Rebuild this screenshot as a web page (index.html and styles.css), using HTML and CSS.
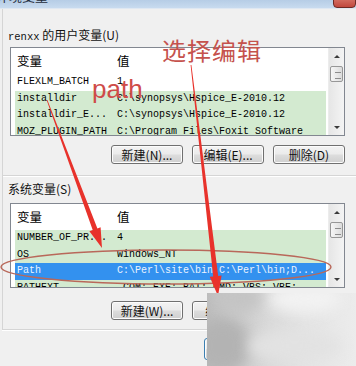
FILE: index.html
```html
<!DOCTYPE html>
<html lang="zh-CN">
<head>
<meta charset="UTF-8">
<meta name="viewport" content="width=device-width,initial-scale=1.0">
<title>环境变量</title>
<link rel="stylesheet" href="styles.css">
</head>
<body>

<!-- ───── title bar ───── -->
<div class="titlebar">
  <span class="title">环境变量</span>
  <span class="close"></span>
</div>

<!-- ───── user variables ───── -->
<section class="group user">
  <div class="caption"><span class="mono">renxx</span> 的用户变量(U)</div>
  <div class="listbox">
    <div class="rows">
      <div class="row head"><span class="k">变量</span><span class="v">值</span></div>
      <div class="row"><span class="k">FLEXLM_BATCH</span><span class="v">1</span></div>
      <div class="row tint"><span class="k">installdir</span><span class="v">C:\synopsys\Hspice_E-2010.12</span></div>
      <div class="row tint"><span class="k">installdir_E...</span><span class="v">C:\synopsys\Hspice_E-2010.12</span></div>
      <div class="row tint"><span class="k">MOZ_PLUGIN_PATH</span><span class="v">C:\Program Files\Foxit Software</span></div>
    </div>
    <div class="scroll"><span class="arrow up"></span><span class="track"><span class="thumb"></span></span><span class="arrow down"></span></div>
  </div>
  <div class="buttons">
    <button>新建(N)...</button>
    <button>编辑(E)...</button>
    <button>删除(D)</button>
  </div>
</section>

<!-- ───── system variables ───── -->
<section class="group sys">
  <div class="caption">系统变量(S)</div>
  <div class="listbox">
    <div class="rows">
      <div class="row head"><span class="k">变量</span><span class="v">值</span></div>
      <div class="row tint"><span class="k">NUMBER_OF_PR...</span><span class="v">4</span></div>
      <div class="row tint"><span class="k">OS</span><span class="v">Windows_NT</span></div>
      <div class="row sel"><span class="k">Path</span><span class="v">C:\Perl\site\bin;C:\Perl\bin;D...</span></div>
      <div class="row tint"><span class="k">PATHEXT</span><span class="v">.COM;.EXE;.BAT;.CMD;.VBS;.VBE;</span></div>
    </div>
    <div class="scroll"><span class="arrow up"></span><span class="track"><span class="thumb"></span></span><span class="arrow down"></span></div>
  </div>
  <div class="buttons">
    <button>新建(W)...</button>
    <button>编辑(I)...</button>
    <button>删除(L)</button>
  </div>
</section>

<div class="footer"><button class="ok">确定</button></div>

<!-- ───── red annotations ───── -->
<svg class="notes" width="356" height="366" viewBox="0 0 356 366">
  <ellipse cx="166" cy="267" rx="165" ry="17" fill="none" stroke="#b9685a" stroke-width="1.4"/>
  <polygon fill="#e8322b" points="46.6,100.1 92.7,230.1 89.4,231.3 102,248 100.6,227.2 97.4,228.4 47.4,99.9"/>
  <polygon fill="#e8322b" points="190.6,65 213.2,276.4 209.7,276.8 218,296 221.6,275.4 218.2,275.9 191.4,65"/>
  <text x="162" y="60" class="note-cn">选择编辑</text>
  <text x="92" y="98" class="note-en">path</text>
</svg>

<!-- blurred patch -->
<div class="smudge"><span class="blob b1"></span><span class="blob b2"></span><span class="blob b3"></span><span class="blob b4"></span></div>

</body>
</html>
```

FILE: styles.css
```css
:root{
  --bg:#f0f0f0; --line:#d5d5d5; --border:#828790; --tint:#d3ead0; --sel:#3391ef;
  --cn:"Noto Sans CJK SC"; --note:#c5524d; --arrow:#e8322b;
}
*{box-sizing:border-box;margin:0;padding:0}
body{width:356px;height:366px;overflow:hidden;position:relative;background:var(--bg);
  font-family:"Liberation Sans","Noto Sans CJK SC",sans-serif;font-size:12px;color:#000}

/* ─ title bar ─ */
.titlebar{height:9px;position:relative;overflow:hidden;background:linear-gradient(180deg,#b6cde6,#c8dbef);border-bottom:1px solid #dfe8f2}
.title{position:absolute;left:-4px;top:-10px;font-size:13px;line-height:14px;color:#1e2b3a}
.close{position:absolute;right:0;top:-4px;width:23px;height:12px;border:1px solid #6d2a25;border-radius:0 0 4px 4px;background:linear-gradient(180deg,#d8796d,#c1483e)}

/* ─ groups ─ */
.group{margin-left:2px;border-left:1px solid var(--line);border-bottom:1px solid var(--line);box-shadow:0 1px 0 #fff;padding-left:7px}
.user{padding-top:19px;padding-bottom:11px}
.sys{padding-top:6px;padding-bottom:9px}
.caption{margin-left:-2px;line-height:14px;height:14px;font-size:12px;font-family:var(--cn),sans-serif;color:#111}
.mono{font-family:"Liberation Mono",monospace;font-size:10.5px}

/* ─ list box ─ */
.listbox{width:335px;display:flex;border:1px solid var(--border);background:#fff;overflow:hidden}
.user .listbox{margin-top:5px;height:89px}
.sys .listbox{margin-top:7px;height:85px}
.rows{flex:1;padding:0 2px 0 4px;overflow:hidden}
.row{display:flex;height:16.5px;line-height:16.5px;padding-left:2px;font-family:"Liberation Mono",monospace;font-size:10px;white-space:nowrap}
.row .k{width:100px;flex:none;overflow:hidden}
.row .v{flex:1;overflow:hidden}
.row.head{height:26px;line-height:26px;font-family:var(--cn),sans-serif;font-size:12.5px}
.row.tint{background:var(--tint)}
.row.sel{background:var(--sel);color:#eaf3ff}

/* ─ scrollbar ─ */
.scroll{width:16px;flex:none;display:flex;flex-direction:column;background:linear-gradient(90deg,#e6e6e6,#f4f4f4);border-left:1px solid #ececec}
.arrow{height:16px;flex:none;position:relative}
.arrow::after{content:"";position:absolute;left:5px;border:3px solid transparent}
.arrow.up::after{top:4px;border-bottom:3px solid #3b3b3b}
.arrow.down::after{bottom:3px;border-top:3px solid #3b3b3b}
.track{flex:1}
.thumb{display:block;margin:2px 1px 0;height:16px;border:1px solid #979797;border-radius:2px;
  background:repeating-linear-gradient(180deg,transparent 0 4px,#8c8c8c 4px 5px,transparent 5px 6px) 4px 1px/6px 12px no-repeat,linear-gradient(90deg,#f6f6f6,#dcdcdc)}

/* ─ buttons ─ */
.buttons{display:flex;justify-content:flex-end;gap:9px;width:335px}
.user .buttons{margin-top:9px}
.sys .buttons{margin-top:13px}
button{width:72px;height:19px;border:1px solid #707070;border-radius:3px;font-family:var(--cn),sans-serif;font-size:12px;line-height:16px;color:#111;
  background:linear-gradient(180deg,#f3f3f3 0%,#ebebeb 48%,#dddddd 52%,#cfcfcf 100%);box-shadow:inset 0 0 0 1px #fcfcfc}
.footer{padding:8px 0 0 204px}
.ok{width:72px;height:22px;border-color:#3c7fb1}

/* ─ annotations ─ */
.notes{position:absolute;left:0;top:0;pointer-events:none}
.note-cn{font-family:var(--cn),sans-serif;font-size:24px;fill:var(--note);letter-spacing:1px}
.note-en{font-family:"Liberation Sans",sans-serif;font-size:26px;fill:#cf4c49}

/* ─ blurred patch ─ */
.smudge{position:absolute;left:207px;top:293px;width:149px;height:73px;overflow:hidden;
  background:linear-gradient(90deg,#bdbdbd 0%,#cbcbcb 20%,#dadada 42%,#e4e4e4 65%,#ececec 100%)}
.blob{position:absolute;border-radius:50%;filter:blur(7px)}
.b1{left:-12px;top:25px;width:55px;height:55px;background:#b3b3b3}
.b2{left:60px;top:-8px;width:75px;height:28px;background:#f2f2f2}
.b3{left:40px;top:38px;width:95px;height:30px;background:#e2e2e2}
.b4{left:10px;top:-10px;width:45px;height:30px;background:#c4c4c4}
```
